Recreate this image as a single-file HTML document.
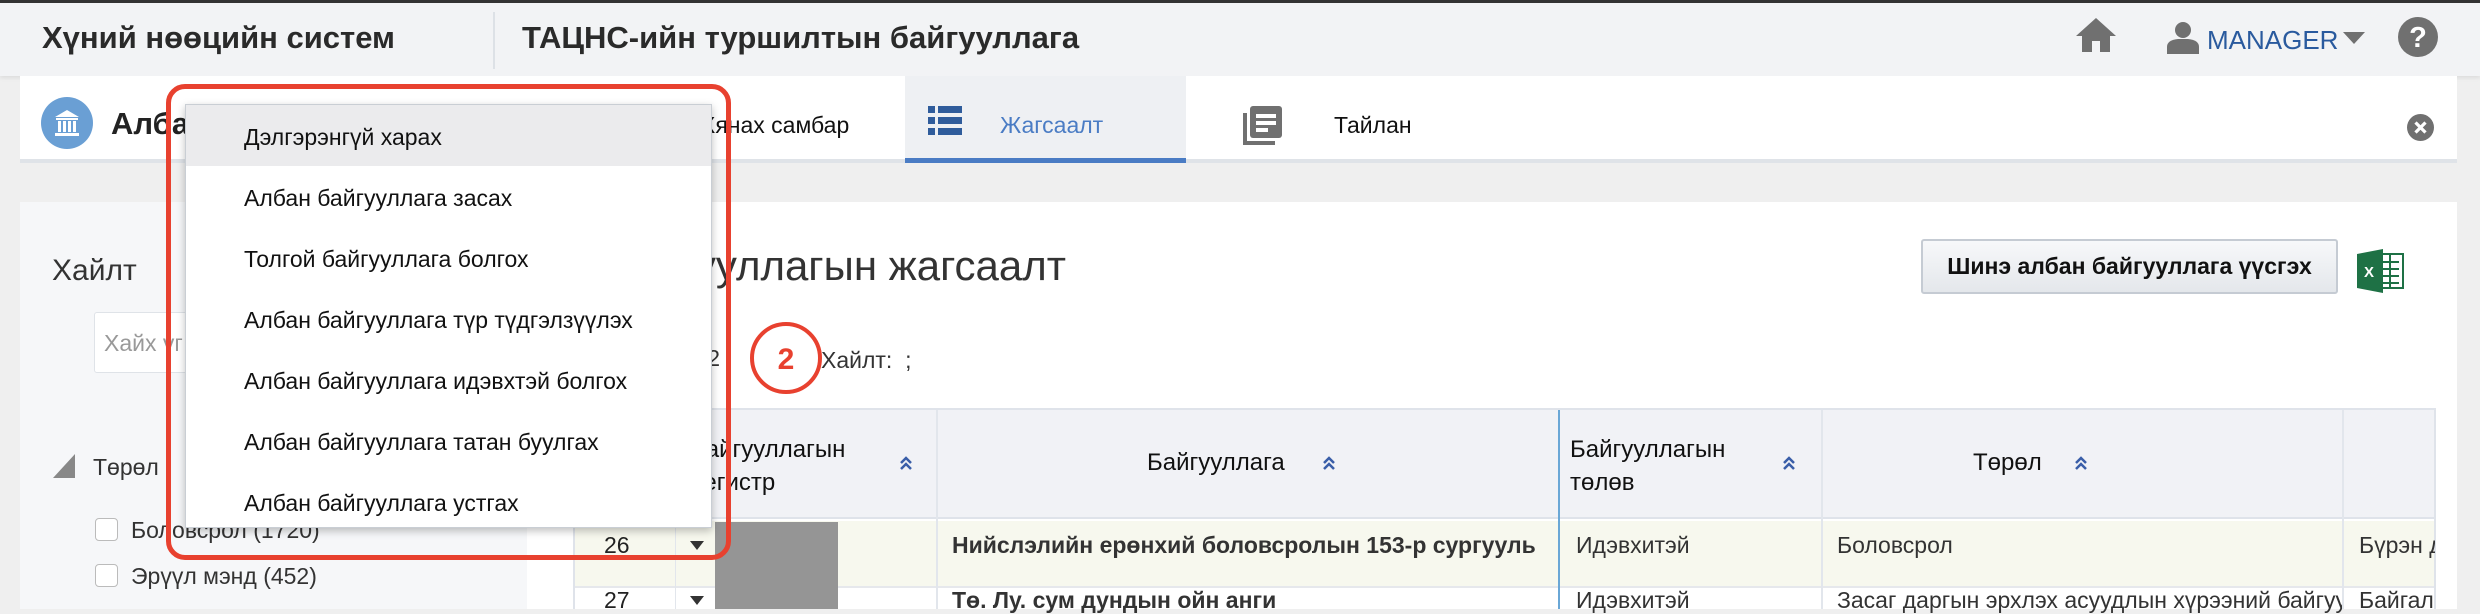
<!DOCTYPE html>
<html><head><meta charset="utf-8"><style>
*{margin:0;padding:0;box-sizing:border-box}
body{width:2480px;height:609px;overflow:hidden;background:#efefef;font-family:"Liberation Sans","DejaVu Sans",sans-serif;position:relative;color:#222}
.a{position:absolute;white-space:nowrap}
.hdr{left:0;top:0;width:2480px;height:76px;background:#f2f3f5;border-top:3px solid #333;box-shadow:0 2px 4px rgba(0,0,0,.08)}
.t1{font-size:31px;font-weight:bold;color:#2a2a2a;top:20px}
.tab{top:76px;left:20px;width:2437px;height:87px;background:#fff;border-bottom:4px solid #dfe3e8}
.menu{left:185px;top:104px;width:527px;height:424px;background:#fff;border:1px solid #c9ced4;box-shadow:0 3px 8px rgba(0,0,0,.25)}
.menu div{height:61px;line-height:64px;padding-left:58px;font-size:23px;color:#111}
.th{font-size:24px;color:#111}
</style></head><body>
<div class="a hdr"></div>
<div class="a t1" style="left:42px">Хүний нөөцийн систем</div>
<div class="a" style="left:493px;top:12px;width:2px;height:57px;background:#dde1e6"></div>
<div class="a t1" style="left:522px">ТАЦНС-ийн туршилтын байгууллага</div>
<svg class="a" style="left:2075px;top:17px" width="42" height="38" viewBox="0 0 42 38"><path d="M21 1 L41 19 H35 V35 H25 V24 H17 V35 H7 V19 H1 Z" fill="#707070"/></svg>
<svg class="a" style="left:2166px;top:21px" width="34" height="33" viewBox="0 0 34 33"><circle cx="17" cy="9" r="8" fill="#707070"/><path d="M1 33 V26 Q1 19 12 18 H22 Q33 19 33 26 V33 Z" fill="#707070"/></svg>
<div class="a" style="left:2207px;top:25px;font-size:26px;color:#2a5a9e">MANAGER</div>
<svg class="a" style="left:2343px;top:32px" width="22" height="12"><path d="M0 0H22L11 12Z" fill="#707070"/></svg>
<svg class="a" style="left:2397px;top:16px" width="42" height="42"><circle cx="21" cy="21" r="20" fill="#707070"/><text x="21" y="31" text-anchor="middle" font-family="Liberation Sans" font-weight="bold" font-size="29" fill="#fff">?</text></svg>

<div class="a tab"></div>
<svg class="a" style="left:41px;top:97px" width="52" height="52"><circle cx="26" cy="26" r="26" fill="#6a9fd4"/><path d="M14 20 L26 13 L38 20Z M15 21H37V23H15Z M17 24H20V35H17Z M22 24H25V35H22Z M27 24H30V35H27Z M32 24H35V35H32Z M14 36H38V39H14Z" fill="#fff"/></svg>
<div class="a" style="left:111px;top:106px;font-size:31px;font-weight:bold;color:#222">Албан байгууллага</div>
<div class="a" style="left:700px;top:112px;font-size:23px;color:#111">Хянах самбар</div>
<div class="a" style="left:905px;top:76px;width:281px;height:87px;background:#eef0f3;border-bottom:5px solid #4a7cc4"></div>
<svg class="a" style="left:928px;top:106px" width="34" height="29"><g fill="#2f5c9b"><rect x="0" y="0" width="7" height="7"/><rect x="10" y="0" width="24" height="7"/><rect x="0" y="11" width="7" height="7"/><rect x="10" y="11" width="24" height="7"/><rect x="0" y="22" width="7" height="7"/><rect x="10" y="22" width="24" height="7"/></g></svg>
<div class="a" style="left:1000px;top:112px;font-size:23px;color:#4a7cc4">Жагсаалт</div>
<svg class="a" style="left:1242px;top:105px" width="42" height="42"><rect x="1" y="8" width="4" height="32" fill="#707070"/><rect x="1" y="36" width="32" height="4" fill="#707070"/><rect x="8" y="1" width="32" height="32" rx="3" fill="#707070"/><rect x="14" y="9" width="20" height="4" fill="#fff"/><rect x="14" y="16" width="20" height="4" fill="#fff"/><rect x="14" y="23" width="12" height="4" fill="#fff"/></svg>
<div class="a" style="left:1334px;top:112px;font-size:23px;color:#111">Тайлан</div>
<svg class="a" style="left:2407px;top:114px" width="27" height="27"><circle cx="13.5" cy="13.5" r="13.5" fill="#707070"/><path d="M8.5 8.5L18.5 18.5M18.5 8.5L8.5 18.5" stroke="#fff" stroke-width="3.2"/></svg>

<div class="a" style="left:20px;top:202px;width:2437px;height:407px;background:#fff"></div>
<div class="a" style="left:20px;top:202px;width:507px;height:407px;background:#f6f7f9"></div>
<div class="a" style="left:52px;top:254px;font-size:30px;color:#333">Хайлт</div>
<div class="a" style="left:94px;top:312px;width:400px;height:61px;background:#fff;border:1px solid #dfe3e8;border-radius:3px"></div>
<div class="a" style="left:104px;top:330px;font-size:23px;color:#999">Хайх үг</div>
<svg class="a" style="left:53px;top:454px" width="22" height="24"><path d="M22 0V24H0Z" fill="#888"/></svg>
<div class="a" style="left:93px;top:454px;font-size:23px;color:#333">Төрөл</div>
<div class="a" style="left:95px;top:518px;width:23px;height:23px;border:1px solid #bbb;border-radius:4px;background:#fff"></div>
<div class="a" style="left:131px;top:517px;font-size:23px;color:#333">Боловсрол (1720)</div>
<div class="a" style="left:95px;top:564px;width:23px;height:23px;border:1px solid #bbb;border-radius:4px;background:#fff"></div>
<div class="a" style="left:131px;top:563px;font-size:23px;color:#333">Эрүүл мэнд (452)</div>

<div class="a" style="left:570px;top:238px;width:496px;height:60px;overflow:hidden"><div class="a" style="right:0px;top:4px;font-size:42px;color:#333">Албан байгууллагын жагсаалт</div></div>
<div class="a" style="left:560px;top:345px;width:160px;text-align:right;font-size:23px;color:#333">Нийт: 2</div>
<div class="a" style="left:821px;top:347px;font-size:23px;color:#333">Хайлт: &nbsp;;</div>
<div class="a" style="left:1921px;top:239px;width:417px;height:55px;background:linear-gradient(#f7f8fa,#e4e7eb);border:2px solid #c5cbd3;border-radius:3px;font-size:23px;font-weight:bold;line-height:51px;text-align:center;color:#111">Шинэ албан байгууллага үүсгэх</div>
<svg class="a" style="left:2357px;top:249px" width="48" height="44"><rect x="18" y="5" width="28" height="34" fill="#fff" stroke="#1e7145" stroke-width="2"/><g stroke="#1e7145" stroke-width="2"><path d="M24 13H42M24 20H42M24 27H42M24 34H42M33 6V38"/></g><path d="M0 5L26 0V44L0 39Z" fill="#1e7145"/><text x="12" y="28" text-anchor="middle" font-family="Liberation Sans" font-weight="bold" font-size="15" fill="#fff">X</text></svg>

<div class="a" style="left:573px;top:408px;width:1863px;height:201px;border:2px solid #dfe3ea;border-bottom:none"></div>
<div class="a" style="left:575px;top:410px;width:1859px;height:109px;background:#f1f2f6;border-bottom:2px solid #dfe3ea"></div>
<div class="a" style="left:575px;top:521px;width:1859px;height:67px;background:#f7f8ee;border-bottom:2px solid #e6e8ec"></div>
<div class="a" style="left:936px;top:410px;width:2px;height:199px;background:#e2e6ec"></div>
<div class="a" style="left:1558px;top:410px;width:2px;height:199px;background:#6aa7d6"></div>
<div class="a" style="left:1821px;top:410px;width:2px;height:199px;background:#e2e6ec"></div>
<div class="a" style="left:2342px;top:410px;width:2px;height:199px;background:#e2e6ec"></div>
<div class="a" style="left:675px;top:521px;width:1px;height:88px;background:#e2e6ec"></div>
<div class="a th" style="left:690px;top:433px;line-height:33px">Байгууллагын<br>регистр</div>
<div class="a th" style="left:1147px;top:449px">Байгууллага</div>
<div class="a th" style="left:1570px;top:433px;line-height:33px">Байгууллагын<br>төлөв</div>
<div class="a th" style="left:1973px;top:449px">Төрөл</div>
<svg class="a" style="left:899px;top:455px" width="14" height="16"><path d="M2 8L7 3L12 8M2 14L7 9L12 14" stroke="#3a5ea8" stroke-width="2.5" fill="none"/></svg>
<svg class="a" style="left:1322px;top:455px" width="14" height="16"><path d="M2 8L7 3L12 8M2 14L7 9L12 14" stroke="#3a5ea8" stroke-width="2.5" fill="none"/></svg>
<svg class="a" style="left:1782px;top:455px" width="14" height="16"><path d="M2 8L7 3L12 8M2 14L7 9L12 14" stroke="#3a5ea8" stroke-width="2.5" fill="none"/></svg>
<svg class="a" style="left:2074px;top:455px" width="14" height="16"><path d="M2 8L7 3L12 8M2 14L7 9L12 14" stroke="#3a5ea8" stroke-width="2.5" fill="none"/></svg>
<div class="a" style="left:604px;top:532px;font-size:23px;color:#222">26</div>
<div class="a" style="left:604px;top:587px;font-size:23px;color:#222">27</div>
<svg class="a" style="left:690px;top:541px" width="14" height="9"><path d="M0 0H14L7 9Z" fill="#333"/></svg>
<svg class="a" style="left:690px;top:596px" width="14" height="9"><path d="M0 0H14L7 9Z" fill="#333"/></svg>
<div class="a" style="left:715px;top:522px;width:123px;height:87px;background:#959595"></div>
<div class="a" style="left:952px;top:532px;width:604px;overflow:hidden;font-size:23px;font-weight:bold;color:#333">Нийслэлийн ерөнхий боловсролын 153-р сургууль</div>
<div class="a" style="left:952px;top:587px;font-size:23px;font-weight:bold;color:#333">Тө. Лу. сум дундын ойн анги</div>
<div class="a" style="left:1576px;top:532px;font-size:23px;color:#333">Идэвхитэй</div>
<div class="a" style="left:1576px;top:587px;font-size:23px;color:#333">Идэвхитэй</div>
<div class="a" style="left:1837px;top:532px;font-size:23px;color:#333">Боловсрол</div>
<div class="a" style="left:1837px;top:587px;width:505px;overflow:hidden;font-size:23px;color:#333">Засаг даргын эрхлэх асуудлын хүрээний байгууллага</div>
<div class="a" style="left:2359px;top:532px;width:76px;overflow:hidden;font-size:23px;color:#333">Бүрэн дүүрэн</div>
<div class="a" style="left:2359px;top:587px;width:76px;overflow:hidden;font-size:23px;color:#333">Байгаль</div>

<div class="a menu">
<div style="background:#ebebed">Дэлгэрэнгүй харах</div>
<div>Албан байгууллага засах</div>
<div>Толгой байгууллага болгох</div>
<div>Албан байгууллага түр түдгэлзүүлэх</div>
<div>Албан байгууллага идэвхтэй болгох</div>
<div>Албан байгууллага татан буулгах</div>
<div>Албан байгууллага устгах</div>
</div>
<div class="a" style="left:166px;top:84px;width:565px;height:476px;border:5px solid #e8412f;border-radius:19px"></div>
<svg class="a" style="left:748px;top:320px" width="76" height="76"><circle cx="38" cy="38" r="34" fill="#fff" stroke="#e8412f" stroke-width="4"/><text x="38" y="49" text-anchor="middle" font-family="Liberation Sans" font-weight="bold" font-size="30" fill="#e8412f">2</text></svg>
</body></html>
